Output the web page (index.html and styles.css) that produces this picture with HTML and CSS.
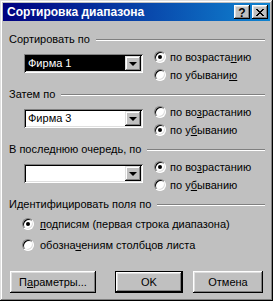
FILE: index.html
```html
<!DOCTYPE html>
<html>
<head>
    <meta charset="UTF-8">
    <title>Сортировка диапазона</title>
    <link rel="stylesheet" href="styles.css">
</head>
<body>
<div class="window">
    <div class="titlebar">
        <span class="title">Сортировка диапазона</span>
        <div class="tbtns">
            <span class="tbtn help">?</span>
            <span class="tbtn">
                <svg width="8" height="7" viewBox="0 0 8 7"><path d="M0 0h2v1h1v1h2v-1h1v-1h2v1h-1v1h-1v1h-1v1h1v1h1v1h1v1h-2v-1h-1v-1h-2v1h-1v1h-2v-1h1v-1h1v-1h1v-1h-1v-1h-1v-1h-1z" fill="#000"/></svg>
            </span>
        </div>
    </div>

    <div class="content">
        <div class="group">
            <div class="legend"><span>Сортировать по</span><div class="rule"></div></div>
            <div class="group-body">
                <div class="combo">
                    <div class="field selected">Фирма 1</div>
                    <div class="drop"><span class="arrow"></span></div>
                </div>
                <div class="radios">
                    <div class="radio checked"><span class="circle"></span><span>по возраста<u>н</u>ию</span></div>
                    <div class="radio"><span class="circle"></span><span>по убывани<u>ю</u></span></div>
                </div>
            </div>
        </div>

        <div class="group">
            <div class="legend"><span>Затем по</span><div class="rule"></div></div>
            <div class="group-body">
                <div class="combo">
                    <div class="field">Фирма 3</div>
                    <div class="drop"><span class="arrow"></span></div>
                </div>
                <div class="radios">
                    <div class="radio"><span class="circle"></span><span>по во<u>з</u>растанию</span></div>
                    <div class="radio checked"><span class="circle"></span><span>по у<u>б</u>ыванию</span></div>
                </div>
            </div>
        </div>

        <div class="group">
            <div class="legend"><span>В последнюю очередь, по</span><div class="rule"></div></div>
            <div class="group-body">
                <div class="combo">
                    <div class="field"></div>
                    <div class="drop"><span class="arrow"></span></div>
                </div>
                <div class="radios">
                    <div class="radio checked"><span class="circle"></span><span>по во<u>з</u>растанию</span></div>
                    <div class="radio"><span class="circle"></span><span>по у<u>б</u>ыванию</span></div>
                </div>
            </div>
        </div>

        <div class="group">
            <div class="legend"><span>Идентифицировать поля по</span><div class="rule"></div></div>
            <div class="ident">
                <div class="radio checked"><span class="circle"></span><span><u>п</u>одписям (первая строка диапазона)</span></div>
                <div class="radio"><span class="circle"></span><span>обозна<u>ч</u>ениям столбцов листа</span></div>
            </div>
        </div>
    </div>

    <div class="buttons">
        <div class="btn params">П<u>а</u>раметры...</div>
        <div class="btn ok default">OK</div>
        <div class="btn cancel">Отмена</div>
    </div>
</div>
</body>
</html>
```

FILE: styles.css
```css
body {
    margin: 0;
    background: #c0c0c0;
    font-family: "Liberation Sans", Arial, sans-serif;
    font-size: 11px;
    color: #000;
}

.window {
    width: 273px;
    height: 301px;
    box-sizing: border-box;
    padding: 3px;
    background: #c0c0c0;
    box-shadow: inset -1px -1px #000, inset 1px 1px #dfdfdf,
                inset -2px -2px #808080, inset 2px 2px #fff;
}

.titlebar {
    height: 18px;
    display: flex;
    align-items: center;
    justify-content: space-between;
    padding: 0 2px 0 4px;
    background: linear-gradient(90deg, #000080, #1084d0);
}

.title {
    color: #fff;
    font-weight: bold;
    font-size: 12px;
}

.tbtns {
    display: flex;
    gap: 2px;
}

.tbtn {
    width: 16px;
    height: 14px;
    box-sizing: border-box;
    display: flex;
    align-items: center;
    justify-content: center;
    background: #c0c0c0;
    box-shadow: inset -1px -1px #000, inset 1px 1px #fff,
                inset -2px -2px #808080, inset 2px 2px #dfdfdf;
}

.tbtn.help {
    font-weight: bold;
    font-size: 12px;
    line-height: 14px;
    padding-top: 1px;
}

.content {
    margin-top: 12px;
    padding: 0 5px 0 6px;
}

.group + .group {
    margin-top: 4px;
}

.legend {
    height: 13px;
    line-height: 13px;
    display: flex;
    align-items: center;
}

.rule {
    flex: 1;
    margin-left: 6px;
    height: 0;
    border-top: 1px solid #808080;
    border-bottom: 1px solid #fff;
}

.group-body {
    margin-top: 2px;
    height: 36px;
    display: flex;
    padding-left: 15px;
}

.combo {
    width: 119px;
    height: 19px;
    margin-top: 6px;
    box-sizing: border-box;
    padding: 2px;
    display: flex;
    background: #fff;
    box-shadow: inset 1px 1px #808080, inset -1px -1px #fff,
                inset 2px 2px #000, inset -2px -2px #dfdfdf;
}

.field {
    flex: 1;
    line-height: 15px;
    padding-left: 2px;
}

.field.selected {
    background: #000;
    color: #fff;
}

.drop {
    width: 16px;
    box-sizing: border-box;
    display: flex;
    align-items: center;
    justify-content: center;
    background: #c0c0c0;
    box-shadow: inset -1px -1px #000, inset 1px 1px #dfdfdf,
                inset -2px -2px #808080, inset 2px 2px #fff;
}

.arrow {
    width: 0;
    height: 0;
    border-left: 4px solid transparent;
    border-right: 4px solid transparent;
    border-top: 4px solid #000;
}

.radios {
    margin-left: 11px;
}

.radio {
    height: 18px;
    display: flex;
    align-items: center;
    white-space: nowrap;
}

.circle {
    position: relative;
    width: 12px;
    height: 12px;
    box-sizing: border-box;
    margin-right: 4px;
    border-radius: 50%;
    background: #fff;
    border: 1px solid;
    border-color: #808080 #fff #fff #808080;
    box-shadow: inset 1px 1px #000, inset -1px -1px #dfdfdf;
}

.radio.checked .circle::after {
    content: "";
    position: absolute;
    left: 3px;
    top: 3px;
    width: 4px;
    height: 4px;
    border-radius: 50%;
    background: #000;
}

.ident {
    margin-top: 2px;
    padding-left: 13px;
}

.ident .radio {
    height: 21px;
}

.ident .circle {
    margin-right: 6px;
}

.buttons {
    margin-top: 16px;
    padding-left: 7px;
    display: flex;
}

.btn {
    height: 22px;
    box-sizing: border-box;
    display: flex;
    align-items: center;
    justify-content: center;
    background: #c0c0c0;
    box-shadow: inset -1px -1px #000, inset 1px 1px #fff,
                inset -2px -2px #808080, inset 2px 2px #dfdfdf;
}

.btn.default {
    border: 1px solid #000;
    box-shadow: inset -1px -1px #000, inset 1px 1px #fff,
                inset -2px -2px #808080, inset 2px 2px #dfdfdf;
}

.params {
    width: 86px;
}

.ok {
    width: 68px;
    margin-left: 19px;
}

.cancel {
    width: 70px;
    margin-left: 10px;
}
```
